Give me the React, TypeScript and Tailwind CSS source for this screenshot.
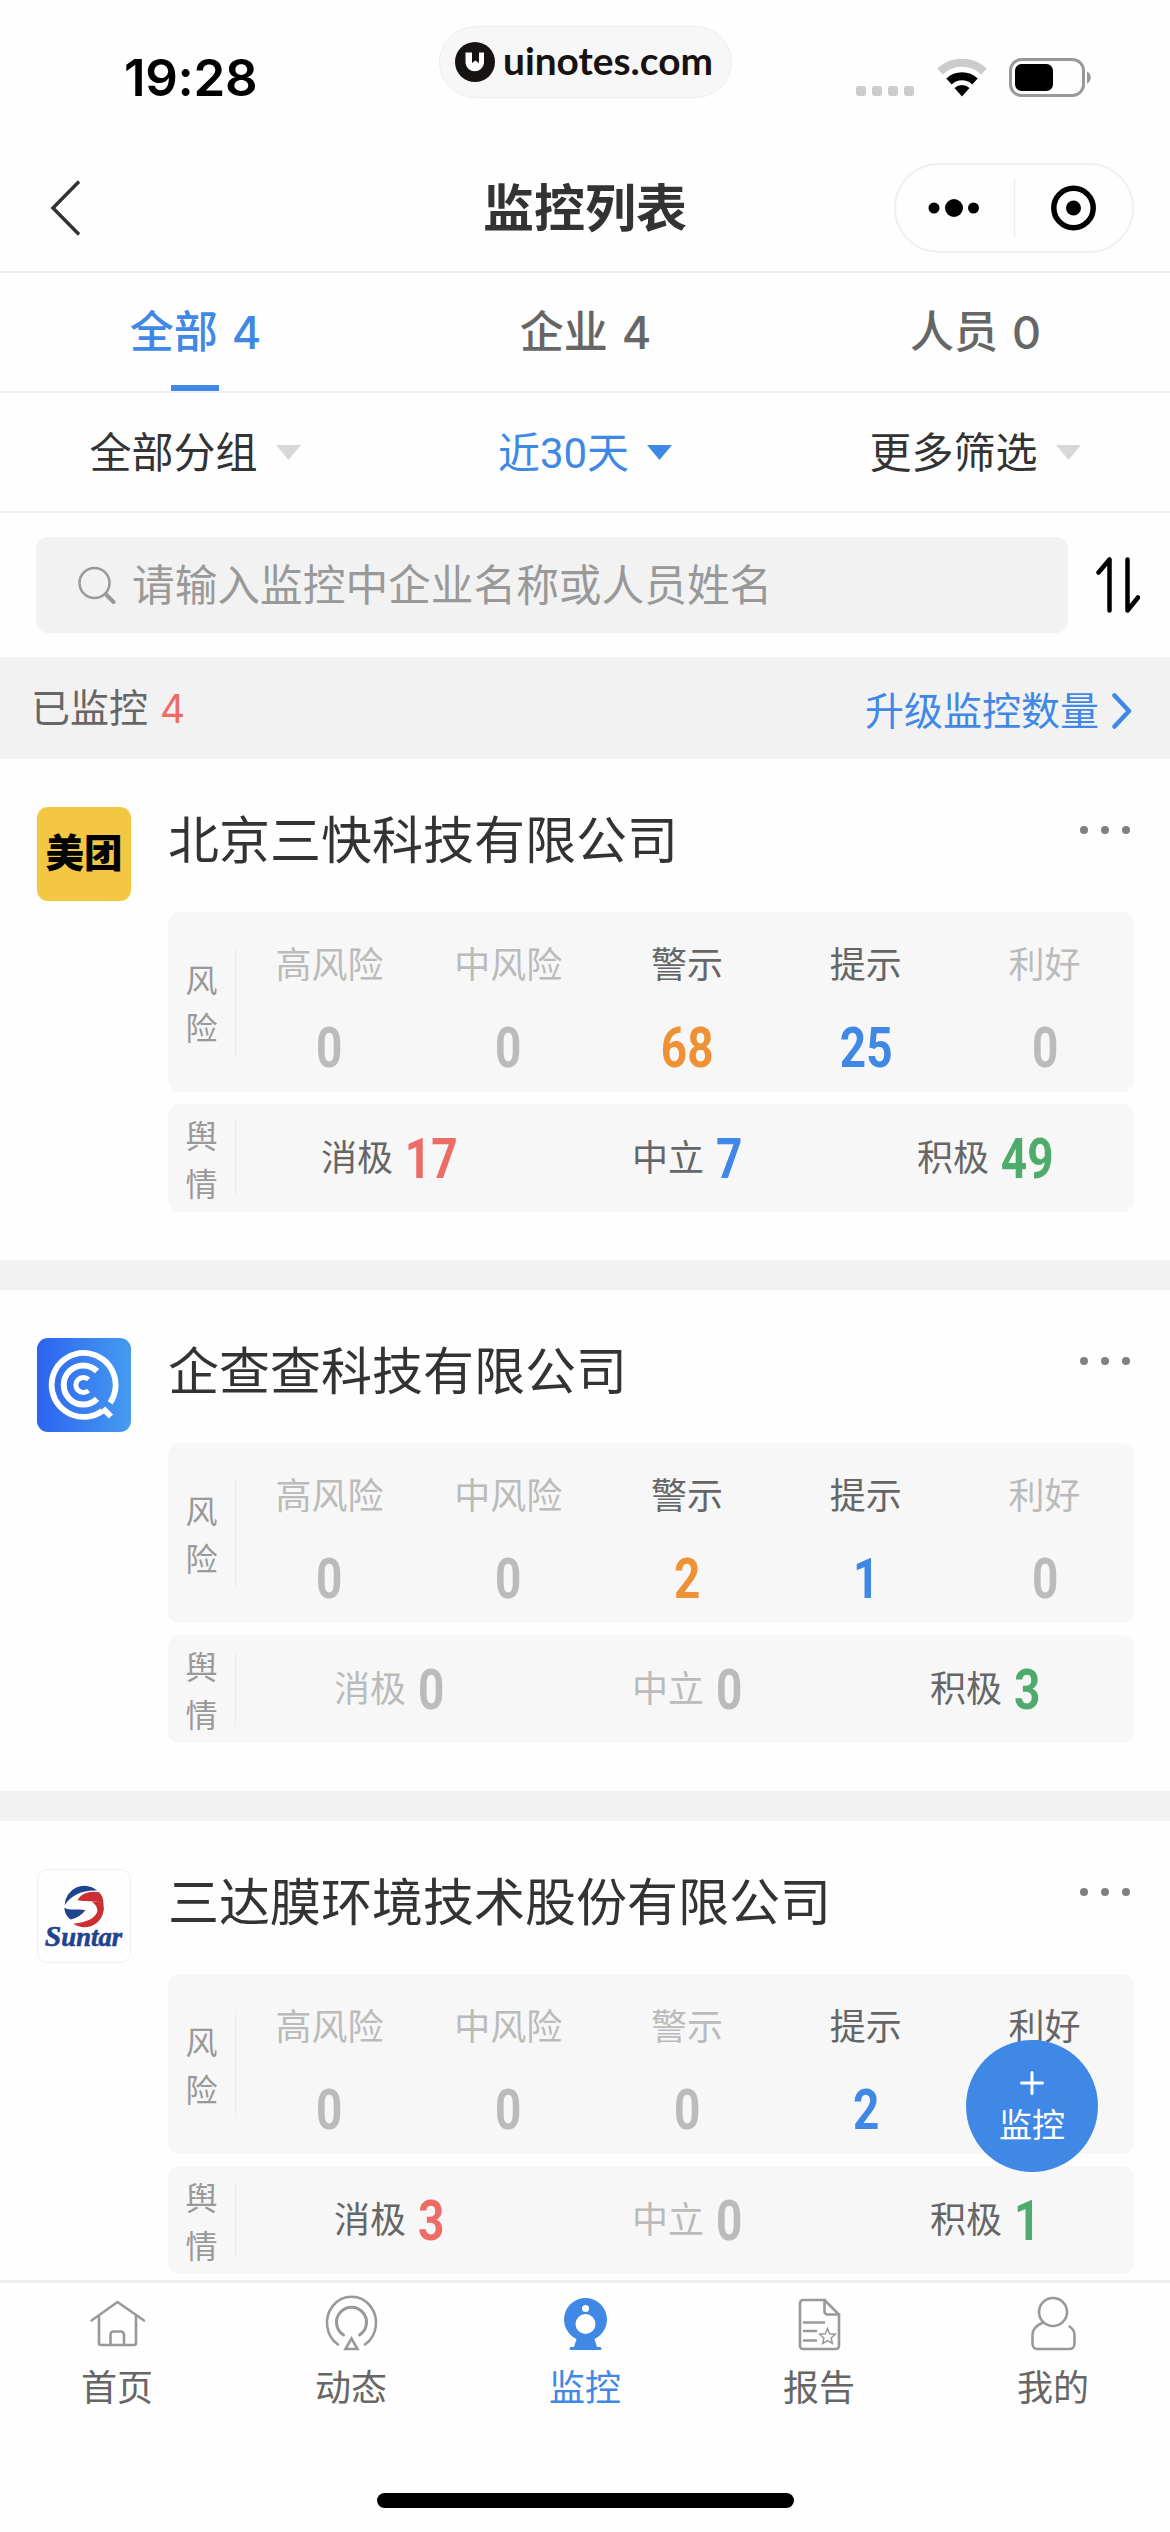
import React, { useState } from 'react';

interface Stat {
  label: string;
  value: number | null;
  color: string;
}

interface Company {
  name: string;
  logo: React.ReactNode;
  risks: Stat[];
  opinions: Stat[];
}

const ORANGE = 'text-[#ee9235]';
const BLUE = 'text-[#4088e5]';
const RED = 'text-[#ec6c66]';
const GREEN = 'text-[#4eab6c]';

const risks = (values: (number | null)[]): Stat[] => [
  { label: '高风险', value: values[0], color: RED },
  { label: '中风险', value: values[1], color: RED },
  { label: '警示', value: values[2], color: ORANGE },
  { label: '提示', value: values[3], color: BLUE },
  { label: '利好', value: values[4], color: GREEN },
];

const opinions = (values: number[]): Stat[] => [
  { label: '消极', value: values[0], color: RED },
  { label: '中立', value: values[1], color: BLUE },
  { label: '积极', value: values[2], color: GREEN },
];

const MeituanLogo = () => (
  <div className="w-[94px] h-[94px] rounded-[11px] bg-[#f4c743] flex items-center justify-center text-[38.5px] font-black text-black">
    美团
  </div>
);

const QccLogo = () => (
  <svg className="w-[94px] h-[94px] rounded-[11px]" viewBox="0 0 94 94" fill="none" stroke="#fff">
    <defs>
      <linearGradient id="qcc" x1="0" y1="0" x2="1" y2="0">
        <stop offset="0" stopColor="#2d63f0" />
        <stop offset="1" stopColor="#459bf0" />
      </linearGradient>
    </defs>
    <rect width="94" height="94" fill="url(#qcc)" stroke="none" />
    <path d="M73.200 64.800A32 32 0 1 0 65.500 72.800" strokeWidth="5.800" />
    <path d="M66 70.500l8 8" strokeWidth="6" />
    <path d="M60 33.200A19.500 19.500 0 1 0 60 60.800" strokeWidth="6" />
    <path d="M51.500 41.500A7.500 7.500 0 1 0 51.500 52.500" strokeWidth="5" />
  </svg>
);

const SuntarLogo = () => (
  <svg className="w-[94px] h-[94px] rounded-[11px] border border-[#eeeeee]" viewBox="0 0 94 94">
    <path d="M27.300 36A20 20 0 0 1 60.500 21C47 20 34 25 27.300 36z" fill="#1f448f" />
    <path d="M27 38.500c6 3.500 15 .5 21.500 2.500-4 5-9 8-15 9.500-4-2.500-6.500-7-6.500-12z" fill="#1f448f" />
    <path d="M40.500 31C43 24 54 20.500 62.500 22.800c3 3 4.500 7 4.200 11.700C60 31 51 33 40.500 31z" fill="#cc2f32" />
    <path d="M66.700 33.500A20 20 0 0 1 36 55c14-1.500 22-5.500 24.500-12 1-4-2-8.500-6-11z" fill="#cc2f32" />
    <text x="46.500" y="78" textAnchor="middle" textLength="79" lengthAdjust="spacingAndGlyphs" fontFamily="'Liberation Serif', serif" fontSize="27" fontWeight="700" fontStyle="italic" fill="#1f448f" stroke="#1f448f" strokeWidth="0.6">
      <tspan fontSize="30">S</tspan>untar
    </text>
  </svg>
);

const companies: Company[] = [
  { name: '北京三快科技有限公司', logo: <MeituanLogo />, risks: risks([0, 0, 68, 25, 0]), opinions: opinions([17, 7, 49]) },
  { name: '企查查科技有限公司', logo: <QccLogo />, risks: risks([0, 0, 2, 1, 0]), opinions: opinions([0, 0, 3]) },
  { name: '三达膜环境技术股份有限公司', logo: <SuntarLogo />, risks: risks([0, 0, 0, 2, null]), opinions: opinions([3, 0, 1]) },
];

// Condensed digits, 26px per character
const Num = ({ stat }: { stat: Stat }) => (
  <span
    style={{ width: String(stat.value ?? '').length * 26 }}
    className={`flex justify-center h-14 font-[Roboto] text-[56px] leading-[56px] font-bold ${stat.value === 0 ? 'text-[#bbbbbb]' : stat.color}`}
  >
    <span className="scale-x-[0.82]">{stat.value}</span>
  </span>
);

const SideLabel = ({ text }: { text: string }) => (
  <div className="w-[67px] shrink-0 flex items-center justify-center pt-[5px]">
    <span className="w-8 text-[32px] leading-[48px] text-[#999999]">{text}</span>
  </div>
);

const CompanyCard = ({ company }: { company: Company }) => (
  <div className="h-[501px] shrink-0 bg-[#fefefe] pt-12 pl-[37px] pr-9 flex gap-[37px]">
    <div className="shrink-0">{company.logo}</div>
    <div className="flex-1 flex flex-col">
      <div className="h-[105px] flex justify-between items-start">
        <h2 className="pt-[2px] text-[51px] leading-[66px] text-[#333333]">{company.name}</h2>
        <div className="flex gap-[13px] mt-[19px] mr-1">
          <i className="w-2 h-2 rounded-full bg-[#808080]" />
          <i className="w-2 h-2 rounded-full bg-[#808080]" />
          <i className="w-2 h-2 rounded-full bg-[#808080]" />
        </div>
      </div>
      <div className="h-[180px] rounded-xl bg-[#f7f7f7] flex items-center">
        <SideLabel text="风险" />
        <div className="w-px h-[108px] bg-[#ececec]" />
        <div className="flex-1 h-full pt-[30px] grid grid-cols-5 pl-1">
          {company.risks.map(r => (
            <div key={r.label} className="flex flex-col items-center gap-[30px]">
              <span className={`text-[36px] leading-[48px] ${r.value === 0 ? 'text-[#bbbbbb]' : 'text-[#666666]'}`}>{r.label}</span>
              <Num stat={r} />
            </div>
          ))}
        </div>
      </div>
      <div className="mt-3 h-[108px] rounded-xl bg-[#f7f7f7] flex items-center">
        <SideLabel text="舆情" />
        <div className="w-px h-[76px] bg-[#ececec]" />
        <div className="flex-1 grid grid-cols-3 pl-1 pt-[2px]">
          {company.opinions.map(o => (
            <div key={o.label} className="flex items-center justify-center gap-3">
              <span className={`text-[36px] leading-[48px] ${o.value === 0 ? 'text-[#bbbbbb]' : 'text-[#666666]'}`}>{o.label}</span>
              <Num stat={o} />
            </div>
          ))}
        </div>
      </div>
    </div>
  </div>
);

const StatusBar = () => (
  <div className="h-[144px] shrink-0 flex pt-[26px]">
    <div className="w-[439px] pt-[21px] pl-[124px] font-[Inter] text-[51px] leading-[62px] font-semibold tracking-[-0.3px] text-black">19:28</div>
    <div className="w-[293px] h-[72px] rounded-full bg-[#f7f7f7] border border-[#eeeeee] flex items-center pl-[15px] gap-2">
      <svg className="w-10 h-10" viewBox="0 0 40 40">
        <circle cx="20" cy="20" r="20" fill="#171312" />
        <path d="M10.500 10.500H17v10.500l3.500-2.500 3.500 2.500V10.500h5V21a9.300 9.300 0 0 1-18.500 0z" fill="#fff" />
      </svg>
      <span className="font-[Lato] text-[38.8px] leading-none font-bold text-[#171312] pb-1">uinotes.com</span>
    </div>
    <div className="flex-1 flex items-end h-[72px] pl-[124px]">
      <div className="flex gap-[6px] pb-[2px]">
        {[0, 1, 2, 3].map(i => <i key={i} className="w-[10px] h-[10px] rounded-[3px] bg-[#cccccc]" />)}
      </div>
      <svg className="w-[50px] h-[38px] ml-[23px] mb-[1px]" viewBox="0 0 50 38">
        <path d="M25 37.500l-7.500-8.500a11 11 0 0 1 15 0z" fill="#000" />
        <path d="M12 22.500a19 19 0 0 1 26 0" stroke="#000" strokeWidth="8" fill="none" />
        <path d="M3 12.500a32 32 0 0 1 44 0" stroke="#cccccc" strokeWidth="8" fill="none" />
      </svg>
      <svg className="w-[83px] h-10 ml-[22px]" viewBox="0 0 83 40">
        <rect x="1.500" y="1.500" width="73" height="36" rx="11" fill="none" stroke="#999" strokeWidth="3" />
        <rect x="6" y="6" width="38" height="27" rx="6.500" fill="#000" />
        <path d="M78 13.500c5 2 5 10 0 12z" fill="#999" />
      </svg>
    </div>
  </div>
);

const NavBar = () => (
  <div className="h-[129px] shrink-0 border-b-2 border-[#eeeeee] grid grid-cols-3 items-center">
    <svg className="w-8 h-14 ml-[49px]" viewBox="0 0 32 56" fill="none" stroke="#333" strokeWidth="3.500">
      <path d="M30 1.500L4 28l26 26.500" />
    </svg>
    <h1 className="text-center pt-1 text-[51px] leading-[66px] font-bold text-[#333333]">监控列表</h1>
    <div className="w-[240px] h-[90px] ml-[114px] border-2 border-[#f0f0f0] rounded-full flex items-center">
      <svg className="w-full h-full" viewBox="0 0 236 86">
        <circle cx="38" cy="43" r="5.500" />
        <circle cx="58" cy="43" r="9" />
        <circle cx="77.500" cy="43" r="5.500" />
        <path d="M118.500 13v60" stroke="#ededed" strokeWidth="1.500" />
        <circle cx="177.500" cy="43" r="19.700" fill="none" stroke="#000" strokeWidth="5.500" />
        <circle cx="177.500" cy="43" r="7.500" />
      </svg>
    </div>
  </div>
);

const tabs = [
  { label: '全部', count: 4 },
  { label: '企业', count: 4 },
  { label: '人员', count: 0 },
];

const filters = [
  { label: '全部分组', active: false },
  { label: '近30天', active: true },
  { label: '更多筛选', active: false },
];

const bottomTabs = [
  {
    label: '首页',
    icon: (
      <>
        <path d="M3.500 22.500L29.500 4l26.500 18.500" />
        <path d="M11 18v27a2 2 0 0 0 2 2h33a2 2 0 0 0 2-2V18" />
        <path d="M22.500 47V36.500a3 3 0 0 1 3-3H33a3 3 0 0 1 3 3V47" />
      </>
    ),
  },
  {
    label: '动态',
    icon: (
      <>
        <path d="M16 46.500A24.500 26 0 1 1 43 46.500" />
        <path d="M21.500 37a15 15 0 1 1 16 0" strokeWidth="3" />
        <path d="M29.500 40.500l-6 10.500h12z" strokeLinejoin="miter" />
      </>
    ),
  },
  {
    label: '监控',
    icon: (
      <g fill="#4088e5" stroke="none">
        <path fillRule="evenodd" d="M29.500 0a21.500 21.500 0 0 1 9 41l2.500 8h3a1.500 1.500 0 0 1 0 3h-29a1.500 1.500 0 0 1 0-3h3l2.500-8A21.500 21.500 0 0 1 29.500 0zm0 7a3.500 3.500 0 1 0 0 7 3.500 3.500 0 1 0 0-7zm0 9a10 10 0 1 0 0 20 10 10 0 1 0 0-20z" />
      </g>
    ),
  },
  {
    label: '报告',
    icon: (
      <>
        <path d="M34.500 2H13a3 3 0 0 0-3 3v43a3 3 0 0 0 3 3h33a3 3 0 0 0 3-3V16.500z" />
        <path d="M34.500 2v11.500a3 3 0 0 0 3 3H49" />
        <path d="M14 24.500h20M14 33h12M14 42.500h12" />
        <path d="M37.500 30.500l2.200 5.200 5.600.5-4.200 3.800 1.300 5.500-4.900-2.900-4.900 2.900 1.300-5.500-4.200-3.800 5.600-.5z" strokeWidth="1.500" />
      </>
    ),
  },
  {
    label: '我的',
    icon: (
      <>
        <circle cx="29" cy="14" r="14" />
        <path d="M19 24.500C12 27.500 8.500 32 8.500 37v9a5 5 0 0 0 5 5h32a5 5 0 0 0 5-5V37c0-3.500-2-6.500-5-8.500" />
      </>
    ),
  },
];

export default function App() {
  const [tab, setTab] = useState(0);
  const [bottomTab, setBottomTab] = useState(2);

  return (
    <div className="relative w-[1170px] h-[2532px] overflow-hidden flex flex-col bg-[#fefefe] font-['Liberation_Sans','Noto_Sans_CJK_SC',sans-serif]">
      <StatusBar />
      <NavBar />

      {/* Tabs */}
      <div className="h-[120px] shrink-0 border-b-2 border-[#f0f0f0] grid grid-cols-3">
        {tabs.map((t, i) => (
          <button
            key={t.label}
            onClick={() => setTab(i)}
            className={`h-[118px] flex flex-col items-center justify-between text-[44px] font-medium ${i === tab ? 'text-[#4088e5]' : 'text-[#666666]'}`}
          >
            <span className="pt-[30px] leading-[60px] flex gap-[14px]">
              {t.label}
              <span className="font-[Inter] text-[45px] font-medium tracking-[-1px]">{t.count}</span>
            </span>
            {i === tab && <i className="w-12 h-[6px] bg-[#4088e5]" />}
          </button>
        ))}
      </div>

      {/* Filters */}
      <div className="h-[120px] shrink-0 border-b-2 border-[#f0f0f0] grid grid-cols-3">
        {filters.map(f => (
          <div key={f.label} className={`flex items-center justify-center gap-[18px] text-[42px] leading-[60px] ${f.active ? "text-[#4088e5] font-['Roboto','Noto_Sans_CJK_SC',sans-serif]" : 'text-[#333333]'}`}>
            <span className="pt-[3px]">{f.label}</span>
            <svg className="w-[25px] h-[15px]" viewBox="0 0 25 15">
              <path d="M0 0h25L12.500 15z" fill={f.active ? '#4088e5' : '#d8d8d8'} />
            </svg>
          </div>
        ))}
      </div>

      {/* Search */}
      <div className="h-[144px] shrink-0 flex items-center pl-9 gap-7">
        <div className="w-[1032px] h-24 rounded-xl bg-[#f2f2f2] flex items-center pl-[42px] gap-4">
          <svg className="w-[38px] h-[38px]" viewBox="0 0 38 38" fill="none" stroke="#999" strokeLinecap="round">
            <circle cx="16.500" cy="17" r="15" strokeWidth="2.500" />
            <path d="M28 28.500l7.500 7.500" strokeWidth="4" />
          </svg>
          <span className="pt-[2px] text-[42.7px] leading-[60px] text-[#999999]">请输入监控中企业名称或人员姓名</span>
        </div>
        <svg className="w-11 h-14" viewBox="0 0 44 56" fill="none" stroke="#000" strokeWidth="4.500" strokeLinecap="round" strokeLinejoin="round">
          <path d="M2.500 15.500L13.500 2.500v51" />
          <path d="M31.500 2.500v51l10.500-13" />
        </svg>
      </div>

      <div className="h-[102px] shrink-0 bg-[#f2f2f2] flex justify-between pl-[31px] pr-[38px]">
        <div className="flex gap-3 pt-px text-[39px] leading-[102px] text-[#666666]">
          已监控 <span className="font-[Inter] text-[#ec6c66]">4</span>
        </div>
        <div className="flex items-center gap-[13px] pt-[6px] text-[39px] leading-[56px] text-[#4088e5]">
          <span className="pt-[2px]">升级监控数量</span>
          <svg className="w-5 h-9" viewBox="0 0 20 36" fill="none" stroke="#4088e5" strokeWidth="4.500" strokeLinecap="round" strokeLinejoin="round">
            <path d="M2.500 2.500L17 18 2.500 33.500" />
          </svg>
        </div>
      </div>

      {/* Companies */}
      <div className="h-[1521px] shrink-0 overflow-hidden flex flex-col gap-[30px] bg-[#f2f2f2]">
        {companies.map(c => <CompanyCard key={c.name} company={c} />)}
      </div>

      <button className="absolute left-[966px] top-[2040px] w-[132px] h-[132px] rounded-full bg-[#4088e5] text-white flex flex-col items-center pt-[31px]">
        <svg className="w-6 h-6" viewBox="0 0 24 24" stroke="#fff" strokeWidth="3" strokeLinecap="round">
          <path d="M12 1.500v21M1.500 12h21" />
        </svg>
        <span className="mt-[7px] text-[33px] leading-[48px]">监控</span>
      </button>

      {/* Bottom bar */}
      <div className="flex-1 border-t-[3px] border-[#eeeeee] bg-[#fefefe] flex flex-col items-center">
        <div className="w-full h-[210px] grid grid-cols-5 pt-[15px]">
          {bottomTabs.map((t, i) => (
            <button
              key={t.label}
              onClick={() => setBottomTab(i)}
              className={`flex flex-col items-center gap-[14px] text-[36px] leading-[48px] ${i === bottomTab ? 'text-[#4088e5]' : 'text-[#666666]'}`}
            >
              <svg className="w-[59px] h-[53px] overflow-visible" viewBox="0 0 59 53" fill="none" stroke="#999" strokeWidth="2.600" strokeLinecap="round">
                {t.icon}
              </svg>
              {t.label}
            </button>
          ))}
        </div>
        <div className="w-[417px] h-[15px] rounded-full bg-black" />
      </div>
    </div>
  );
}
